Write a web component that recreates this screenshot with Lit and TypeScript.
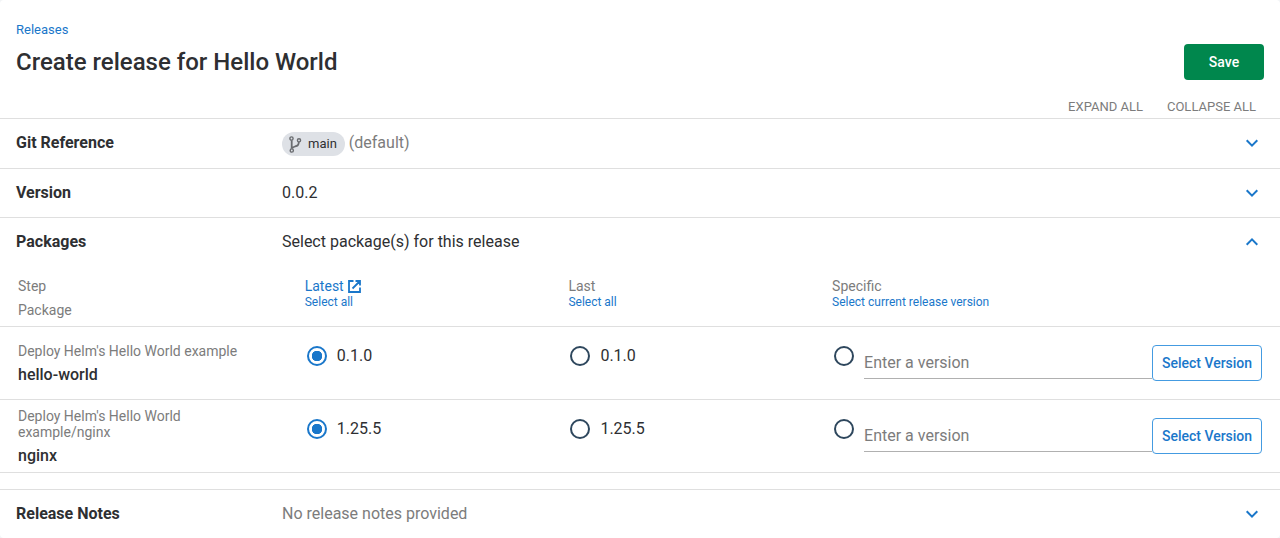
import { LitElement, html, css, svg, nothing } from "lit";
import { customElement, property, state } from "lit/decorators.js";

interface PackageRow {
  step: string;
  name: string;
  version: string;
}

const packages: PackageRow[] = [
  { step: "Deploy Helm's Hello World example", name: "hello-world", version: "0.1.0" },
  { step: "Deploy Helm's Hello World example/nginx", name: "nginx", version: "1.25.5" },
];

const branchIcon = svg`
  <circle cx="2.500" cy="2.500" r="1.600" />
  <circle cx="2.800" cy="14.500" r="1.600" />
  <circle cx="10" cy="4.300" r="1.600" />
  <path class="stem" d="M2.700 4.200v8.600M9.800 6c0 3.400-1.500 3.800-3.800 4.500-1.600.5-2.700 1-3.100 2" />
`;

@customElement("form-section")
export class FormSection extends LitElement {
  @property() heading = "";
  @property({ type: Boolean, reflect: true }) open = false;
  @property({ type: Boolean }) hasBody = false;

  static styles = css`
    :host {
      display: block;
      border-top: 1px solid #dfdfdf;
    }
    .bar {
      display: grid;
      grid-template-columns: 242px 1fr 24px;
      column-gap: 24px;
      align-items: start;
      width: 100%;
      padding: 12px 16px;
      border: 0;
      background: none;
      color: inherit;
      font: inherit;
      line-height: 24px;
      text-align: left;
      cursor: pointer;
    }
    .heading {
      font-weight: 700;
    }
    .chevron {
      display: block;
      width: 24px;
      height: 24px;
      fill: none;
      stroke: #1a77ca;
      stroke-width: 2;
    }
    .body {
      padding-bottom: 16px;
    }
  `;

  private toggle() {
    this.open = !this.open;
  }

  render() {
    return html`
      <button class="bar" type="button" aria-expanded=${this.open} @click=${this.toggle}>
        <span class="heading">${this.heading}</span>
        <span class="summary"><slot name="summary"></slot></span>
        <svg class="chevron" viewBox="0 0 24 24" aria-hidden="true">
          <path d=${this.open ? "M6.700 14.700L12 9.400l5.300 5.300" : "M6.700 9.300l5.300 5.300 5.300-5.300"} />
        </svg>
      </button>
      ${this.open && this.hasBody ? html`<div class="body"><slot></slot></div>` : nothing}
    `;
  }
}

@customElement("app-root")
export class AppRoot extends LitElement {
  @state() private choices: string[] = packages.map(() => "latest");

  static styles = css`
    :host {
      display: block;
      background: #f2f4f6;
      color: #2e2f32;
      font-family: Roboto, sans-serif;
      font-size: 16px;
      line-height: 24px;
    }
    .card {
      border-radius: 4px;
      background: #ffffff;
    }
    a {
      color: #1a77ca;
      text-decoration: none;
    }
    button {
      font-family: inherit;
      cursor: pointer;
    }
    .header {
      padding: 20px 16px 0;
    }
    .crumb {
      display: block;
      font-size: 13px;
      line-height: 20px;
    }
    .title-row {
      display: flex;
      align-items: center;
      justify-content: space-between;
      margin-top: 4px;
    }
    .title {
      margin: 0;
      font-size: 24px;
      font-weight: 500;
      line-height: 36px;
    }
    .save {
      width: 80px;
      height: 36px;
      border: 0;
      border-radius: 4px;
      background: #00874d;
      color: #ffffff;
      font-size: 14px;
      font-weight: 500;
    }
    .bulk {
      display: flex;
      justify-content: flex-end;
      gap: 24px;
      padding: 17px 24px 1px;
    }
    .bulk-button {
      padding: 0;
      border: 0;
      background: none;
      color: #7c7c7c;
      font-size: 13px;
      line-height: 20px;
      text-transform: uppercase;
    }
    .git {
      display: flex;
      align-items: flex-start;
      gap: 4px;
    }
    .chip {
      display: inline-flex;
      align-items: center;
      gap: 6px;
      height: 24px;
      margin-top: 1px;
      padding: 0 8px 0 7px;
      border-radius: 12px;
      background: #dee1e6;
      font-size: 13px;
    }
    .branch {
      width: 13px;
      height: 17px;
      fill: none;
      stroke: #6a6c70;
      stroke-width: 1.4;
    }
    .branch .stem {
      stroke-width: 1.8;
    }
    .muted {
      color: #7c7c7c;
    }
    .table {
      width: 100%;
      border-collapse: collapse;
      table-layout: fixed;
    }
    .col-step {
      width: 22.4%;
    }
    .col-version {
      width: 20.6%;
    }
    .table th,
    .table td {
      padding: 0 18px;
      border-bottom: 1px solid #dfdfdf;
      text-align: left;
    }
    .table thead th {
      padding-top: 8px;
      padding-bottom: 4px;
      color: #7c7c7c;
      font-size: 14px;
      font-weight: 400;
      vertical-align: top;
    }
    .table .choice-head {
      padding-top: 12px;
      line-height: 16px;
    }
    .line {
      display: block;
    }
    .select-link {
      display: block;
      padding: 0;
      border: 0;
      background: none;
      color: #1a77ca;
      font-size: 12px;
      line-height: 16px;
    }
    .latest {
      display: flex;
      align-items: center;
      gap: 4px;
    }
    .external {
      width: 13px;
      height: 13px;
      fill: none;
      stroke: #1a77ca;
      stroke-width: 1.8;
    }
    .table tbody th {
      padding-top: 2px;
      font-weight: 400;
    }
    .step {
      display: block;
      color: #7c7c7c;
      font-size: 14px;
      line-height: 16px;
    }
    .name {
      display: block;
      margin-top: 6px;
      font-weight: 500;
      line-height: 20px;
    }
    .table td {
      padding-top: 17px;
      padding-bottom: 17px;
      vertical-align: top;
    }
    .choice {
      display: flex;
      align-items: center;
      gap: 8px;
    }
    .radio {
      appearance: none;
      flex: none;
      box-sizing: border-box;
      width: 20px;
      height: 20px;
      margin: 2px;
      border: 2px solid #2e475d;
      border-radius: 50%;
    }
    .radio:checked {
      border-color: #1a77ca;
      background: radial-gradient(circle, #1a77ca 5px, transparent 5.5px);
    }
    .specific {
      display: flex;
      align-items: center;
      min-height: 38px;
    }
    .specific .radio {
      align-self: flex-start;
      margin-right: 10px;
    }
    .version-input {
      flex: 1;
      min-width: 0;
      box-sizing: border-box;
      height: 32px;
      padding: 0;
      border: 0;
      border-bottom: 1px solid #b0b0b0;
      outline: 0;
      background: none;
      color: inherit;
      font: inherit;
    }
    .version-input::placeholder {
      color: #7c7c7c;
      opacity: 1;
    }
    .select-version {
      box-sizing: border-box;
      width: 110px;
      height: 36px;
      padding: 0;
      border: 1px solid #449be1;
      border-radius: 4px;
      background: #ffffff;
      color: #1a77ca;
      font-size: 14px;
      font-weight: 500;
    }
  `;

  private setAll(open: boolean) {
    this.renderRoot.querySelectorAll<FormSection>("form-section").forEach((s) => (s.open = open));
  }

  private choose(index: number, value: string) {
    this.choices = this.choices.map((c, i) => (i === index ? value : c));
  }

  private chooseAll(value: string) {
    this.choices = packages.map(() => value);
  }

  private radio(index: number, value: string, label?: string) {
    return html`<input
      class="radio"
      type="radio"
      name="package-${index}"
      aria-label=${label ?? nothing}
      .checked=${this.choices[index] === value}
      @change=${() => this.choose(index, value)}
    />`;
  }

  private row(p: PackageRow, i: number) {
    return html`
      <tr>
        <th scope="row"><span class="step">${p.step}</span><span class="name">${p.name}</span></th>
        <td><label class="choice">${this.radio(i, "latest")}<span>${p.version}</span></label></td>
        <td><label class="choice">${this.radio(i, "last")}<span>${p.version}</span></label></td>
        <td>
          <div class="specific">
            ${this.radio(i, "specific", "Specific version")}
            <input
              class="version-input"
              type="text"
              placeholder="Enter a version"
              aria-label="Version of ${p.name}"
              @input=${() => this.choose(i, "specific")}
            />
            <button class="select-version" type="button">Select Version</button>
          </div>
        </td>
      </tr>
    `;
  }

  render() {
    return html`
      <main class="card">
        <header class="header">
          <a class="crumb" href="#releases">Releases</a>
          <div class="title-row">
            <h1 class="title">Create release for Hello World</h1>
            <button class="save" type="button">Save</button>
          </div>
        </header>
        <div class="bulk">
          <button class="bulk-button" type="button" @click=${() => this.setAll(true)}>Expand all</button>
          <button class="bulk-button" type="button" @click=${() => this.setAll(false)}>Collapse all</button>
        </div>
        <form-section heading="Git Reference">
          <span class="git" slot="summary">
            <span class="chip"><svg class="branch" viewBox="0 0 13 17" aria-hidden="true">${branchIcon}</svg>main</span>
            <span class="muted">(default)</span>
          </span>
        </form-section>
        <form-section heading="Version"><span slot="summary">0.0.2</span></form-section>
        <form-section heading="Packages" open hasBody>
          <span slot="summary">Select package(s) for this release</span>
          <table class="table">
            <colgroup>
              <col class="col-step" />
              <col class="col-version" />
              <col class="col-version" />
              <col />
            </colgroup>
            <thead>
              <tr>
                <th scope="col"><span class="line">Step</span><span class="line">Package</span></th>
                <th class="choice-head" scope="col">
                  <a class="latest" href="#latest">Latest
                    <svg class="external" viewBox="0 0 13 13" aria-hidden="true">
                      <path d="M5.500 1H1v11h11V7.500M7.500 1H12v4.500M12 1L4.500 8.500" />
                    </svg>
                  </a>
                  <button class="select-link" type="button" @click=${() => this.chooseAll("latest")}>Select all</button>
                </th>
                <th class="choice-head" scope="col">
                  <span class="line">Last</span>
                  <button class="select-link" type="button" @click=${() => this.chooseAll("last")}>Select all</button>
                </th>
                <th class="choice-head" scope="col">
                  <span class="line">Specific</span>
                  <button class="select-link" type="button" @click=${() => this.chooseAll("specific")}>
                    Select current release version
                  </button>
                </th>
              </tr>
            </thead>
            <tbody>
              ${packages.map((p, i) => this.row(p, i))}
            </tbody>
          </table>
        </form-section>
        <form-section heading="Release Notes">
          <span class="muted" slot="summary">No release notes provided</span>
        </form-section>
      </main>
    `;
  }
}
